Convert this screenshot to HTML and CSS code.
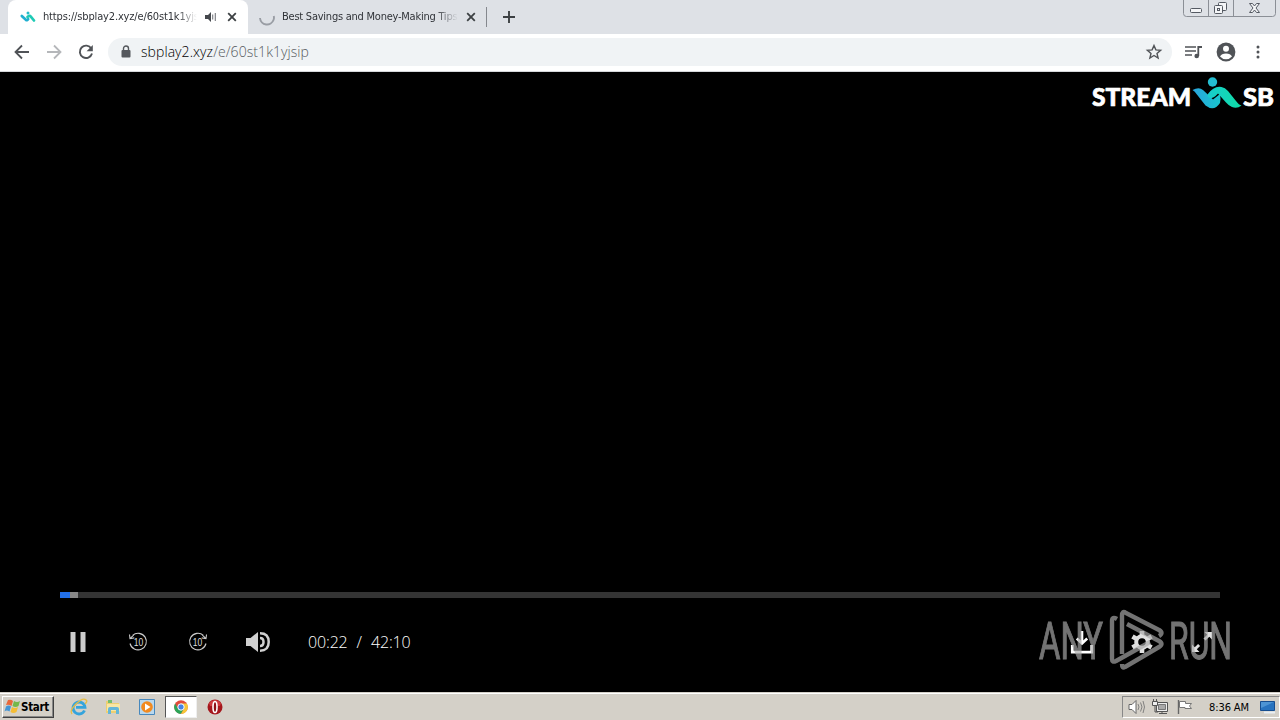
FILE: index.html
```html
<!DOCTYPE html>
<html lang="en">
<head>
<meta charset="utf-8">
<title>sbplay2.xyz</title>
<link rel="stylesheet" href="styles.css">
</head>
<body>
<div class="screen">
  <header class="tabs">
    <div class="tab active">
      <svg class="favicon" viewBox="0 0 16 16"><path d="M1.800 7l4 3.800q1.500 1 2.400-.6" stroke="#20afd0" stroke-width="2.700" fill="none" stroke-linecap="round"/><path d="M7.500 8q2-2 3.500-.2l3 3.700" stroke="#1fcab5" stroke-width="2.700" fill="none" stroke-linecap="round"/><circle cx="8" cy="4" r="1.500" fill="#25bdcb"/></svg>
      <span class="title t1">https://sbplay2.xyz/e/60st1k1yjsip</span>
      <svg class="speaker" viewBox="0 0 12 12"><path d="M0 4h3l3-3v10L3 8H0z" fill="#45484d"/><path d="M7.700 3.500v5M10.300 2v8" stroke="#777a7f" stroke-width="1.100"/></svg>
      <svg class="close" viewBox="0 0 10 10"><path d="M1.200 1.200l7.600 7.600M8.800 1.200L1.200 8.800" stroke="#3c4043" stroke-width="1.800"/></svg>
    </div>
    <div class="tab">
      <svg class="favicon" viewBox="0 0 16 16"><path d="M1 9a7 7 0 0 0 13.600 1.800Q15.300 9 14.800 7" fill="none" stroke="#999da4" stroke-width="1.900"/></svg>
      <span class="title t2">Best Savings and Money-Making Tips</span>
      <svg class="close" viewBox="0 0 10 10"><path d="M1.200 1.200l7.600 7.600M8.800 1.200L1.200 8.800" stroke="#3c4043" stroke-width="1.800"/></svg>
    </div>
    <i class="divider"></i>
    <svg class="plus" viewBox="0 0 12 12"><path d="M6 0v12M0 6h12" stroke="#3c4043" stroke-width="1.900"/></svg>
    <svg class="window-buttons" viewBox="0 0 94 18"><path d="M.5 0v13.500q0 3 3 3h86q3 0 3-3V0M25.500 0v16M50.500 0v16" fill="none" stroke="#8b8f96"/><g fill="#f4f5f7" stroke="#555a63"><rect x="7.500" y="8.500" width="11" height="4" rx="1"/><rect x="35.500" y="2.500" width="8" height="8" rx="1"/><rect x="31.500" y="5.500" width="8" height="8" rx="1"/><rect x="34.500" y="8.500" width="2" height="2"/><path d="M66.500 3.500h3l2 2.500 2-2.500h3l-3.500 4.500 3.500 4.500h-3l-2-2.500-2 2.500h-3L70 8z"/></g></svg>
  </header>
  <nav class="toolbar">
    <svg class="nav-icon" viewBox="0 0 16 16"><path d="M15 8H2M8 1.500L1.500 8 8 14.500" fill="none" stroke="#505357" stroke-width="1.800"/></svg>
    <svg class="nav-icon" viewBox="0 0 16 16"><path d="M1 8h13M8 1.500L14.500 8 8 14.500" fill="none" stroke="#b5b7ba" stroke-width="1.800"/></svg>
    <svg class="nav-icon" viewBox="0 0 16 16"><path d="M13.300 4.500A6.200 6.200 0 1 0 14 9.500" fill="none" stroke="#505357" stroke-width="1.900"/><path d="M14.800 1v6.200H8.600z" fill="#505357"/></svg>
    <div class="address">
      <svg class="lock" viewBox="0 0 10 13"><rect x=".5" y="5" width="9" height="7.500" rx="1" fill="#55585d"/><path d="M2.500 5V3.500a2.500 2.500 0 0 1 5 0V5" fill="none" stroke="#55585d" stroke-width="1.400"/></svg>
      <span class="url"><b>sbplay2.xyz</b>/e/60st1k1yjsip</span>
      <svg class="star" viewBox="0 0 16 16"><path d="M8 1.600l1.900 4.300 4.700.4-3.600 3.100 1.100 4.600L8 11.500 3.900 14 5 9.400 1.400 6.300l4.700-.4z" fill="none" stroke="#505357" stroke-width="1.400"/></svg>
    </div>
    <svg class="playlist" viewBox="0 0 17 14"><path d="M0 2h11M0 6h11M0 10h7" stroke="#505357" stroke-width="1.600"/><path d="M13.300 11V2H17" fill="none" stroke="#505357" stroke-width="1.800"/><circle cx="11.700" cy="11" r="2.300" fill="#505357"/></svg>
    <svg class="profile" viewBox="0 0 20 20"><circle cx="10" cy="10" r="9.400" fill="#505357"/><circle cx="10" cy="6.800" r="3" fill="#fff"/><path d="M4 14.500q1.500-3 6-3t6 3Q13.500 17.300 10 17.300T4 14.500z" fill="#fff"/></svg>
    <svg class="dots" viewBox="0 0 4 14"><g fill="#505357"><circle cx="2" cy="2" r="1.500"/><circle cx="2" cy="7" r="1.500"/><circle cx="2" cy="12" r="1.500"/></g></svg>
  </nav>
  <main class="player">
    <svg class="brand" viewBox="0 0 190 40">
      <defs><linearGradient id="lg"><stop offset="0" stop-color="#2aa4dc"/><stop offset="1" stop-color="#18c6cf"/></linearGradient><linearGradient id="rg"><stop offset="0" stop-color="#18cccd"/><stop offset="1" stop-color="#0fdda5"/></linearGradient></defs>
      <g class="brand-text"><text x="2" y="34" textLength="99" lengthAdjust="spacingAndGlyphs">STREAM</text><text x="153" y="34" textLength="31" lengthAdjust="spacingAndGlyphs">SB</text></g>
      <path d="M102.500 18Q109 14.500 113 18L123 27.500L130 22Q131 27 130 31Q124 40 115.500 33.500L106.500 22Q105 19.500 102.500 18z" fill="url(#lg)"/>
      <path d="M117.500 22.500Q124 13.500 131.500 15Q135 15.500 138 19L146 29Q149 33 151.500 33.500Q147 37 142 35Q139 34 136 30.500L128 21.500Q123 27 120 26Q117 25 117.500 22.500z" fill="url(#rg)"/>
      <circle cx="122.500" cy="10" r="4.700" fill="#24bdd1"/>
    </svg>
    <div class="progress"><span class="played"></span><span class="buffered"></span></div>
    <div class="controls">
      <svg viewBox="0 0 30 30"><path d="M7.500 5h5v20h-5zM17.500 5h5v20h-5z" fill="#ccc"/></svg>
      <svg viewBox="0 0 30 30"><path d="M9.600 8.300A8.300 8.300 0 1 1 7 16.500M6.500 7.500l.5 4.200 4.300-.8M7 11.700l3.800-3.800" fill="none" stroke="#ccc" stroke-width="1.100"/><text x="10.700" y="18.700" textLength="9.500" lengthAdjust="spacingAndGlyphs" class="seek">10</text></svg>
      <svg viewBox="0 0 30 30"><path d="M20.400 8.300A8.300 8.300 0 1 0 23 16.500M23.500 7.500l-.5 4.200-4.300-.8M23 11.700l-3.800-3.800" fill="none" stroke="#ccc" stroke-width="1.100"/><text x="9.800" y="18.700" textLength="9.500" lengthAdjust="spacingAndGlyphs" class="seek">10</text></svg>
      <svg viewBox="0 0 30 30"><path d="M3 11h4.500l7.500-6v20l-7.500-6H3z" fill="#d0d0d0"/><path d="M17 11q3.500 0 3.500 4T17 19M17 6.300q8.700 0 8.700 8.700T17 23.700" fill="none" stroke="#d0d0d0" stroke-width="2.500"/></svg>
      <span class="time"><span>00:22</span><span>/</span><span>42:10</span></span>
      <div class="right-controls">
        <svg viewBox="0 0 30 30"><path d="M15 4v12M9.800 11.500l5.200 5 5.200-5" fill="none" stroke="#fff" stroke-width="2.600"/><path d="M5.300 18v7.200h19.400V18" fill="none" stroke="#fff" stroke-width="2.800"/></svg>
        <svg viewBox="0 0 30 30"><circle cx="15" cy="15" r="5.800" fill="none" stroke="#e0e0e0" stroke-width="4"/><path d="M15 4v4M15 22v4M5.470 9.500l3.460 2M21.060 18.500l3.460 2M5.470 20.500l3.460-2M21.060 11.500l3.460-2" stroke="#e0e0e0" stroke-width="4.600"/></svg>
        <svg viewBox="0 0 30 30"><path d="M17.500 5h7.500v7.500l-2.700-2.700-3.800 3.700-2-2 3.700-3.800zM5 17.500v7.500h7.500l-2.700-2.700 3.300-3.300-2-2-3.400 3.200z" fill="#e0e0e0"/></svg>
      </div>
    </div>
    <svg class="watermark" viewBox="0 0 196 70">
      <g class="any-run"><text x="1" y="52" textLength="64" lengthAdjust="spacingAndGlyphs">ANY</text><text x="131" y="52" textLength="63" lengthAdjust="spacingAndGlyphs">RUN</text></g>
      <path d="M79 12Q74 9 74 14V52Q74 56 78 54L112 35M84 47V9Q84 3 88 6L121 23Q126 26 121 29M89 17L121 34Q126 37 121 40L87 60Q84 62 84 57" fill="none" stroke="#aaa" stroke-width="4.400" stroke-linejoin="round"/>
    </svg>
  </main>
  <footer class="taskbar">
    <div class="start"><svg viewBox="0 0 16 16"><path d="M3 1q3-1 5 1L6.500 7Q4 5 1 6z" fill="#e9683a"/><path d="M9 2q3 2 6 0l-1.500 5q-3 2-6 0z" fill="#75b84b"/><path d="M1 7.500q3-2 5 0l-1.500 5q-3-2-5 0z" fill="#4495d5"/><path d="M7 8q3 2 6 0l-1.500 5q-3 2-6 0z" fill="#f5bd35"/></svg><span>Start</span></div>
    <div class="task"><svg viewBox="0 0 18 18"><path d="M14.500 12.500A6 6 0 1 1 15 9.300H6" fill="none" stroke="#35a4dc" stroke-width="2.800"/><path d="M2 16Q-1 13 6 6T16 2Q18 3 15 6" fill="none" stroke="#e6bd45" stroke-width="1.400"/></svg></div>
    <div class="task"><svg viewBox="0 0 18 18"><path d="M2 3h5l1 2h7v10H2z" fill="#edcf71"/><path d="M4 2h4v3H4z" fill="#75bd6c"/><path d="M3 6h13v7H3z" fill="#f8e6a4"/><path d="M4 16v-5q0-2 2-2h7q2 0 2 2v5h-3v-4H7v4z" fill="#64b6d8"/></svg></div>
    <div class="task"><svg viewBox="0 0 18 18"><path d="M1.500 1.500h15v15h-15z" fill="#b9d8ee" stroke="#4788bd"/><circle cx="9" cy="9" r="5.800" fill="#f18a20"/><path d="M7 5.500l5.500 3.500L7 12.500z" fill="#fff"/></svg></div>
    <div class="task selected"><svg viewBox="0 0 18 18"><circle cx="9" cy="9" r="6.800" fill="#e24b3b"/><path d="M3.100 5.600A6.800 6.800 0 0 0 9 15.800L12 10.700 9 9 6 10.700z" fill="#2ba558"/><path d="M9 15.800A6.800 6.800 0 0 0 14.900 5.600H9L12 10.700z" fill="#f7c638"/><circle cx="9" cy="9" r="3.200" fill="#4683e5" stroke="#fff"/></svg></div>
    <div class="task"><svg viewBox="0 0 18 18"><circle cx="9" cy="9" r="7.500" fill="#a5161c"/><path d="M3 5q6-6 12 0l-1 3H4z" fill="#cf3a3e"/><ellipse cx="9" cy="9" rx="2" ry="5.500" fill="#8f1016" stroke="#fff" stroke-width="1.600"/></svg></div>
    <div class="tray">
      <svg class="volume" viewBox="0 0 18 18"><path d="M2 6.500h3l4-4v13l-4-4H2z" fill="#fff" stroke="#666"/><path d="M11 6q2 3 0 6M13.500 4.500q3 4.500 0 9M16 3q3 6 0 12" fill="none" stroke="#777" stroke-width=".9"/></svg>
      <svg viewBox="0 0 18 18"><path d="M5.500 4.500h11v9h-11z" fill="#eee" stroke="#555"/><path d="M7.500 6.500h7v5h-7z" fill="#aaa" stroke="#777"/><path d="M8 15.500h8M11 14v2M4 7v7h3" stroke="#555" fill="none"/><path d="M1.500 3.500h5v4h-5zM2.500 1v2M5.500 1v2" fill="#eee" stroke="#555"/></svg>
      <svg class="flag" viewBox="0 0 18 18"><path d="M3.500 2v14" stroke="#666" stroke-width="1.400"/><path d="M4.500 3.500h6v2h6l-2 2.500 2 2.500H10v-1H4.500z" fill="#fff" stroke="#777"/></svg>
      <time>8:36 AM</time>
      <svg class="desktop" viewBox="0 0 18 18"><path d="M1.500 3.500h14v9h-14z" fill="#2873bf" stroke="#174e90"/><path d="M2 4h13L2 10z" fill="#4d94d4"/><path d="M5 14.500h11" stroke="#e9eef3" stroke-width="2"/></svg>
    </div>
  </footer>
</div>
</body>
</html>
```
FILE: styles.css
```css
* { box-sizing: border-box; }
body { margin: 0; overflow: hidden; font-family: "DejaVu Sans Condensed", "DejaVu Sans", sans-serif; font-stretch: condensed; }
svg { display: block; flex: none; overflow: visible; }
.screen { width: 1280px; height: 720px; display: flex; flex-direction: column; background: #000; }
.tabs { height: 34px; flex: none; display: flex; align-items: center; background: #dee1e6; }
.tab { height: 34px; display: flex; align-items: center; padding-left: 11px; }
.active { width: 240px; margin-left: 8px; padding-left: 12px; background: #fff; border-radius: 8px 8px 0 0; }
.favicon { width: 16px; height: 16px; margin-right: 7px; }
.title { overflow: hidden; white-space: nowrap; font-size: 11px; line-height: 16px; color: #303338; -webkit-mask-image: linear-gradient(to right, #000 87%, transparent); mask-image: linear-gradient(to right, #000 87%, transparent); }
.t1 { width: 154px; letter-spacing: -.15px; }
.t2 { width: 176px; letter-spacing: -.24px; }
.speaker { width: 12px; height: 12px; margin-left: 8px; }
.close { width: 10px; height: 10px; margin-left: 10px; }
.t2 + .close { margin-left: 8px; }
.divider { width: 1px; height: 20px; margin-left: 10px; background: #85888e; }
.plus { width: 12px; height: 12px; margin-left: 16px; }
.window-buttons { width: 94px; height: 18px; margin-left: auto; margin-right: 3px; align-self: flex-start; }
.toolbar { height: 38px; flex: none; display: flex; align-items: center; padding-left: 14px; padding-bottom: 2px; background: #fff; border-bottom: 1px solid #d5d7da; }
.nav-icon { width: 16px; height: 16px; margin-right: 16px; }
.address { width: 1064px; height: 28px; margin-left: -2px; display: flex; align-items: center; padding: 0 10px 0 13px; border-radius: 14px; background: #f0f3f5; }
.lock { width: 10px; height: 13px; }
.url { margin-left: 10px; font: 300 14px/20px "Open Sans", sans-serif; letter-spacing: .07px; color: #55595d; white-space: nowrap; }
.url b { font-weight: 300; color: #000; }
.star { width: 16px; height: 16px; margin-left: auto; }
.playlist { width: 17px; height: 14px; margin-left: 13px; }
.profile { width: 20px; height: 20px; margin-left: 14px; }
.dots { width: 4px; height: 14px; margin-left: 20px; }
.player { position: relative; flex: 1; display: flex; flex-direction: column; background: #000; }
.brand { width: 190px; height: 40px; margin-left: auto; }
.brand-text { font: 900 25px Lato, sans-serif; fill: #fff; stroke: #fff; stroke-width: .7px; stroke-linejoin: round; }
.progress { height: 6px; margin: 480px 60px 0; display: flex; background: #343434; }
.played { width: 10px; background: #226fe8; }
.buffered { width: 8px; background: #888; }
.controls { display: flex; align-items: center; height: 30px; margin: 29px 63px 0; gap: 30px; }
.controls svg { width: 30px; height: 30px; }
.seek { font: 10.5px "Liberation Sans", sans-serif; fill: #ddd; }
.time { margin-left: 5px; display: flex; gap: 9px; color: #fff; font: 300 16px "Open Sans", sans-serif; letter-spacing: -.15px; }
.right-controls { display: flex; gap: 30px; margin-left: auto; }
.watermark { position: absolute; left: 1038px; top: 535px; width: 196px; height: 70px; opacity: .68; pointer-events: none; }
.any-run { font: 400 52px Roboto, sans-serif; fill: #aaa; stroke: #aaa; stroke-width: 1.1px; }
.taskbar { height: 28px; flex: none; display: flex; align-items: center; background: #d4d0c8; border-top: 1px solid #d4d0c8; box-shadow: inset 0 1px #fff; padding: 2px 0 1px 2px; }
.start { width: 52px; height: 22px; margin-right: 9px; display: flex; align-items: center; border: 1px solid; border-color: #fff #404040 #404040 #fff; box-shadow: inset -1px -1px #888; font-size: 11.5px; font-weight: bold; letter-spacing: -.3px; }
.start svg { width: 16px; height: 16px; margin: 0 0 0 2px; }
.task { width: 32px; height: 22px; margin-right: 2px; display: flex; align-items: center; justify-content: center; }
.task svg, .tray svg { width: 18px; height: 18px; }
.selected { background: #fff; border: 1px solid; border-color: #555 #eee #eee #555; }
.tray { height: 22px; width: 158px; margin-left: auto; display: flex; align-items: center; padding-left: 4px; border: 1px solid; border-color: #888 #fff #fff #888; font-size: 11px; letter-spacing: -.1px; }
.tray svg { margin-right: 6px; }
.tray .flag { margin-right: 16px; }
.tray time { width: 41px; white-space: nowrap; }
.tray .desktop { margin-left: 9px; margin-right: 0; }
```
